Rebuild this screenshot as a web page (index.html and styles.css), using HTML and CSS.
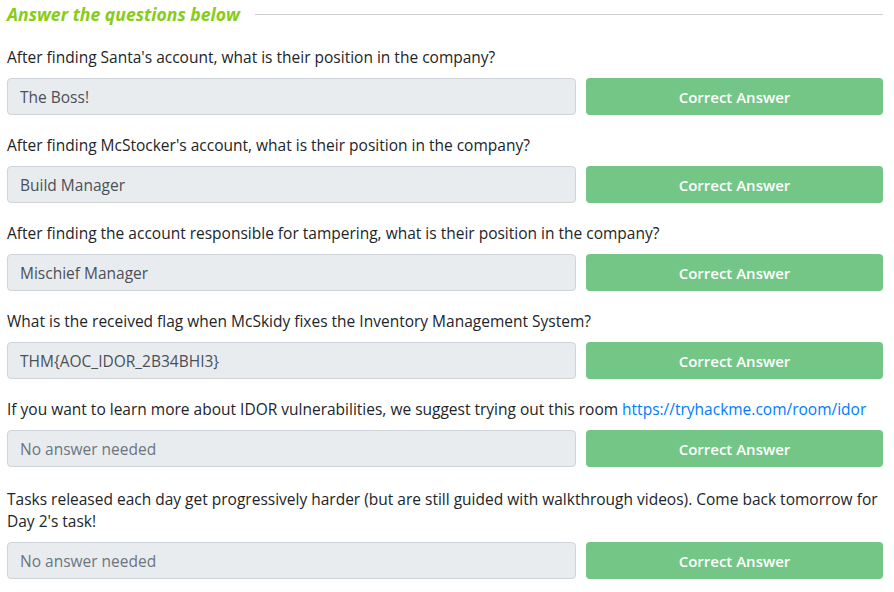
FILE: index.html
```html
<!DOCTYPE html>
<html lang="en">
<head>
  <meta charset="UTF-8" />
  <meta name="viewport" content="width=device-width, initial-scale=1.0"/>
  <title>Answer the questions below</title>
  <link rel="stylesheet" href="styles.css">
</head>
<body>
  <div class="questions">
    <div class="heading">
      <h2>Answer the questions below</h2>
      <span class="rule"></span>
    </div>

    <div class="question">
      <p>After finding Santa's account, what is their position in the company?</p>
      <div class="answer-row">
        <input class="answer" type="text" value="The Boss!" disabled>
        <button class="submit" disabled>Correct Answer</button>
      </div>
    </div>

    <div class="question">
      <p>After finding McStocker's account, what is their position in the company?</p>
      <div class="answer-row">
        <input class="answer" type="text" value="Build Manager" disabled>
        <button class="submit" disabled>Correct Answer</button>
      </div>
    </div>

    <div class="question">
      <p>After finding the account responsible for tampering, what is their position in the company?</p>
      <div class="answer-row">
        <input class="answer" type="text" value="Mischief Manager" disabled>
        <button class="submit" disabled>Correct Answer</button>
      </div>
    </div>

    <div class="question">
      <p>What is the received flag when McSkidy fixes the Inventory Management System?</p>
      <div class="answer-row">
        <input class="answer" type="text" value="THM{AOC_IDOR_2B34BHI3}" disabled>
        <button class="submit" disabled>Correct Answer</button>
      </div>
    </div>

    <div class="question">
      <p>If you want to learn more about IDOR vulnerabilities, we suggest trying out this room <a href="https://tryhackme.com/room/idor">https://tryhackme.com/room/idor</a></p>
      <div class="answer-row">
        <input class="answer" type="text" placeholder="No answer needed" disabled>
        <button class="submit" disabled>Correct Answer</button>
      </div>
    </div>

    <div class="question last">
      <p>Tasks released each day get progressively harder (but are still guided with walkthrough videos). Come back tomorrow for<br>Day 2's task!</p>
      <div class="answer-row">
        <input class="answer" type="text" placeholder="No answer needed" disabled>
        <button class="submit" disabled>Correct Answer</button>
      </div>
    </div>
  </div>
</body>
</html>
```

FILE: styles.css
```css
body {
  margin: 0;
  font-family: "Open Sans", "Noto Sans", sans-serif;
  color: #212529;
  background-color: #fff;
  overflow: hidden;
}
.questions {
  width: 876px;
  padding-left: 7px;
}
.heading {
  display: flex;
  align-items: center;
  height: 28px;
  margin-bottom: 18px;
}
.heading h2 {
  margin: 0;
  font-size: 17.6px;
  font-style: italic;
  font-weight: 700;
  color: #88cc14;
  white-space: nowrap;
}
.rule {
  flex: 1;
  height: 1px;
  background-color: #cfcfcf;
  margin-left: 15px;
}
.question {
  margin-bottom: 19px;
}
.question.last {
  margin-top: 21px;
}
.question p {
  margin: 0 0 10px 0;
  font-size: 15.5px;
  line-height: 22px;
  white-space: nowrap;
}
.question a {
  color: #007bff;
  text-decoration: none;
}
.answer-row {
  display: flex;
  gap: 10px;
}
.answer {
  flex: 1;
  height: 37px;
  box-sizing: border-box;
  padding: 0 12px;
  font-family: inherit;
  font-size: 15.5px;
  color: #495057;
  background-color: #e9ecef;
  border: 1px solid #ced4da;
  border-radius: 4px;
}
.answer::placeholder {
  color: #6c757d;
}
.submit {
  width: 297px;
  height: 37px;
  font-family: inherit;
  font-size: 15px;
  font-weight: 600;
  color: #fff;
  background-color: #73c686;
  border: none;
  border-radius: 4px;
}
```
